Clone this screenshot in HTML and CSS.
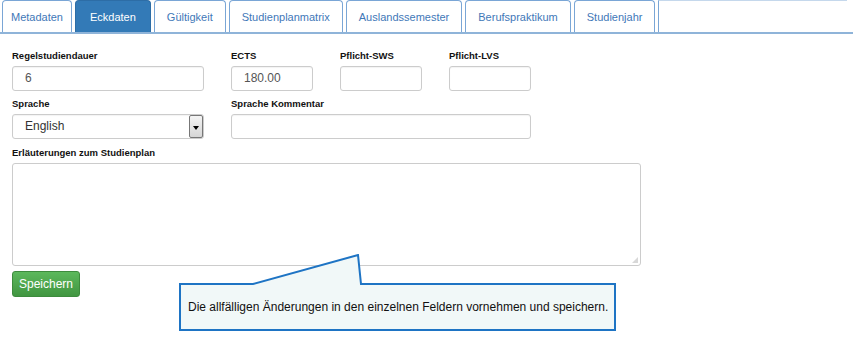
FILE: index.html
```html
<!DOCTYPE html>
<html lang="de">
<head>
  <meta charset="UTF-8" />
  <title>Eckdaten</title>
  <link rel="stylesheet" href="styles.css">
</head>
<body>
  <ul class="tabs">
    <li><a href="#">Metadaten</a></li>
    <li class="active"><a href="#">Eckdaten</a></li>
    <li><a href="#">Gültigkeit</a></li>
    <li><a href="#">Studienplanmatrix</a></li>
    <li><a href="#">Auslandssemester</a></li>
    <li><a href="#">Berufspraktikum</a></li>
    <li><a href="#">Studienjahr</a></li>
    <li class="rest"></li>
  </ul>
  <form class="form">
    <div class="grid">
      <div class="field">
        <label>Regelstudiendauer</label>
        <div class="input">6</div>
      </div>
      <div class="field">
        <label>ECTS</label>
        <div class="input">180.00</div>
      </div>
      <div class="field">
        <label>Pflicht-SWS</label>
        <div class="input"></div>
      </div>
      <div class="field">
        <label>Pflicht-LVS</label>
        <div class="input"></div>
      </div>
      <div class="field">
        <label>Sprache</label>
        <div class="input select">English<span class="arrow"></span></div>
      </div>
      <div class="field wide">
        <label>Sprache Kommentar</label>
        <div class="input"></div>
      </div>
    </div>
    <div class="field notes">
      <label>Erläuterungen zum Studienplan</label>
      <div class="textarea"><span class="grip"></span></div>
    </div>
    <button type="button" class="btn">Speichern</button>
  </form>
  <div class="callout">
    <svg width="440" height="80" viewBox="0 0 440 80">
      <polygon points="1,30 74,30 179,1 182,30 436,30 436,76 1,76" fill="#f1f8f8" stroke="#1e74c4" stroke-width="2"/>
    </svg>
    <p>Die allfälligen Änderungen in den einzelnen Feldern vornehmen und speichern.</p>
  </div>
</body>
</html>
```
FILE: styles.css
```css
html, body { height: 360px; }
body { margin: 0; font-family: "Liberation Sans", Arial, sans-serif; color: #333; background: #fff; position: relative; overflow: hidden; }
.tabs { list-style: none; margin: 0; padding: 0 0 0 2px; display: flex; height: 32px; border-bottom: 2px solid #8fb4d9; }
.tabs li { margin-right: 3px; border: 1px solid #7aa6d6; border-bottom: none; border-radius: 4px 4px 0 0; }
.tabs li a { display: block; padding: 0 12px; line-height: 32px; font-size: 11px; color: #3f78b8; text-decoration: none; }
.tabs li:first-child a { padding: 0 8px; }
.tabs li.active { background: #337ab7; border-color: #2d6da6; }
.tabs li.active a { color: #fff; padding: 0 14px; }
.tabs li.rest { flex: 0 0 188px; border-radius: 0; border: none; border-left: 1px solid #7aa6d6; border-top: 1px solid #c5d8ec; }
.form { padding: 14px 12px 0; }
.grid { display: grid; grid-template-columns: 192px 82px 82px 82px; column-gap: 27px; }
.wide { grid-column: 2 / 5; }
.field { margin-bottom: 5px; }
.field label { display: block; font-size: 9.5px; font-weight: bold; color: #111; height: 18px; line-height: 16px; }
.notes { margin-top: 1px; margin-bottom: 5px; }
.input { height: 25px; box-sizing: border-box; border: 1px solid #ccc; border-radius: 3px; font-size: 12px; line-height: 23px; padding-left: 12px; color: #555; box-shadow: inset 0 1px 1px rgba(0,0,0,0.05); position: relative; }
.select { color: #333; }
.arrow { position: absolute; right: 0; top: 0; width: 14px; height: 23px; border: 1px solid #777; background: linear-gradient(#f4f4f4, #d6d6d6); box-sizing: border-box; border-radius: 2px; }
.arrow::after { content: ""; position: absolute; left: 3px; top: 10px; border-left: 3px solid transparent; border-right: 3px solid transparent; border-top: 4px solid #000; }
.textarea { width: 629px; height: 103px; box-sizing: border-box; border: 1px solid #ccc; border-radius: 3px; position: relative; }
.grip { position: absolute; right: 2px; bottom: 2px; width: 6px; height: 6px; background: radial-gradient(circle, #aaa 0.6px, transparent 0.8px) 0 0 / 2px 2px; clip-path: polygon(100% 0, 100% 100%, 0 100%); }
.btn { display: block; width: 68px; height: 26px; border: 1px solid #3d8b3d; border-radius: 3px; background: linear-gradient(#5cb85c, #419641); color: #fff; font-family: "Liberation Sans", Arial, sans-serif; font-size: 12px; padding: 0; }
.callout { position: absolute; left: 179px; top: 254px; width: 440px; height: 80px; }
.callout svg { display: block; }
.callout p { position: absolute; left: 9px; top: 46px; margin: 0; font-size: 12px; color: #111; white-space: nowrap; }
```
